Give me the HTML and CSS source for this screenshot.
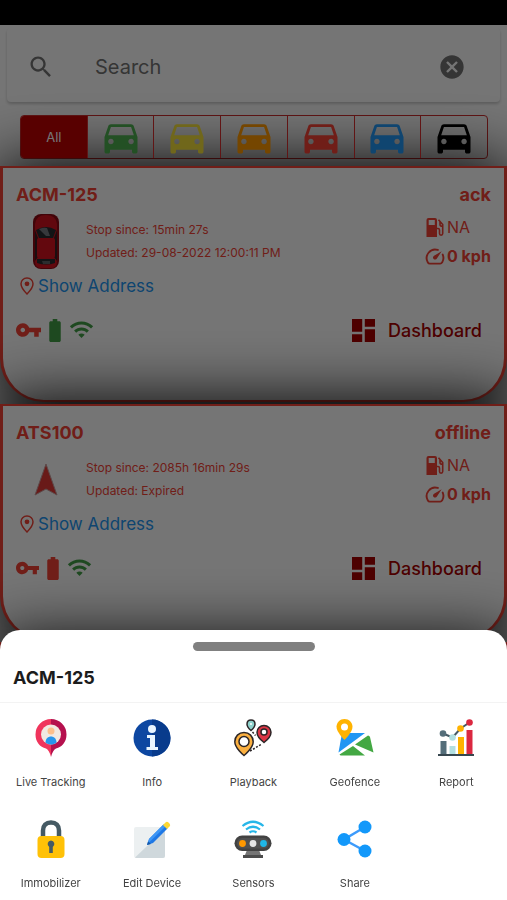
FILE: index.html
```
<!DOCTYPE html>
<html lang="en">
<head>
    <meta charset="UTF-8">
    <meta name="viewport" content="width=device-width, initial-scale=1.0">
    <title>Devices</title>
    <link rel="stylesheet" href="styles.css">
</head>
<body>
    <svg class="sprite" aria-hidden="true">
        <symbol id="car" viewBox="0 0 24 24"><path d="M18.92 6.01C18.72 5.42 18.16 5 17.5 5h-11c-.66 0-1.21.42-1.42 1.01L3 12v8c0 .55.45 1 1 1h1c.55 0 1-.45 1-1v-1h12v1c0 .55.45 1 1 1h1c.55 0 1-.45 1-1v-8l-2.08-5.99zM6.5 16c-.83 0-1.5-.67-1.5-1.5S5.67 13 6.5 13s1.5.67 1.5 1.5S7.33 16 6.5 16zm11 0c-.83 0-1.5-.67-1.5-1.5s.67-1.5 1.5-1.5 1.5.67 1.5 1.5-.67 1.5-1.5 1.5zM5 11l1.5-4.5h11L19 11H5z"/></symbol>
        <symbol id="key" viewBox="1 6 22 12"><path d="M12.65 10C11.83 7.67 9.61 6 7 6c-3.31 0-6 2.69-6 6s2.69 6 6 6c2.61 0 4.83-1.67 5.65-4H17v4h4v-4h2v-4H12.65zM7 14c-1.1 0-2-.9-2-2s.9-2 2-2 2 .9 2 2-.9 2-2 2z"/></symbol>
        <symbol id="battery" viewBox="7 2 10 20"><path d="M15.67 4H14V2h-4v2H8.33C7.6 4 7 4.6 7 5.33v15.33C7 21.4 7.6 22 8.33 22h7.33c.74 0 1.34-.6 1.34-1.33V5.33C17 4.6 16.4 4 15.67 4z"/></symbol>
        <symbol id="wifi" viewBox="1 4 22 17"><path d="M1 9l2 2c4.97-4.97 13.03-4.97 18 0l2-2C16.93 2.93 7.08 2.93 1 9zm8 8l3 3 3-3c-1.65-1.66-4.34-1.66-6 0zm-4-4l2 2c2.76-2.76 7.24-2.76 10 0l2-2C15.14 9.14 8.87 9.14 5 13z"/></symbol>
        <symbol id="dashboard" viewBox="3 3 18 18"><path d="M3 13h8V3H3v10zm0 8h8v-6H3v6zm10 0h8V11h-8v10zm0-18v6h8V3h-8z"/></symbol>
        <symbol id="place" viewBox="0 0 14 18"><path d="M7 1C3.500 1 1 3.600 1 6.800 1 11 7 17 7 17s6-6 6-10.200C13 3.600 10.500 1 7 1z" fill="none" stroke="currentColor" stroke-width="1.500"/><circle cx="7" cy="6.800" r="2.400"/></symbol>
        <symbol id="fuel" viewBox="0 0 18 19"><path fill-rule="evenodd" d="M2.500 0H9a2 2 0 0 1 2 2v17H.5V2a2 2 0 0 1 2-2zm.2 2v5h6.100V2z"/><path d="M11 10.500h1c1 0 1.500.6 1.500 1.500v3.500c0 2.200 3.200 2.200 3.200 0V6.500L12.500 1.800M14 3.500v3.200c0 1 .8 1.600 2.500 1.600" fill="none" stroke="currentColor" stroke-width="1.600"/></symbol>
        <symbol id="speed" viewBox="0 0 21 18"><path d="M13.500 2.100A9 9 0 0 0 3 15.200c.5.900 1 1.300 2 1.300h11c1 0 1.500-.4 2-1.300a9 9 0 0 0 .6-8.200" fill="none" stroke="currentColor" stroke-width="2" stroke-linecap="round"/><path d="M17.500 3.500l-5 7.600a2.200 2.200 0 1 1-3-3z"/></symbol>
    </svg>

    <div class="screen">
        <div class="statusbar"></div>

        <div class="search">
            <svg class="search-icon" viewBox="0 0 24 24"><path d="M15.5 14h-.79l-.28-.27C15.41 12.59 16 11.11 16 9.500 16 5.910 13.090 3 9.500 3S3 5.910 3 9.500 5.910 16 9.500 16c1.610 0 3.090-.59 4.230-1.570l.27.28v.79l5 4.990L20.490 19l-4.990-5zm-6 0C7.010 14 5 11.990 5 9.500S7.010 5 9.500 5 14 7.010 14 9.500 11.990 14 9.500 14z"/></svg>
            <input type="text" placeholder="Search" aria-label="Search">
            <button class="clear" aria-label="Clear">
                <svg viewBox="0 0 24 24"><path d="M12 2C6.470 2 2 6.470 2 12s4.470 10 10 10 10-4.470 10-10S17.530 2 12 2zm5 13.590L15.590 17 12 13.410 8.410 17 7 15.590 10.590 12 7 8.410 8.410 7 12 10.590 15.590 7 17 8.410 13.410 12 17 15.590z"/></svg>
            </button>
        </div>

        <div class="filters">
            <button class="filter active">All</button>
            <button class="filter green" aria-label="Moving"><svg><use href="#car"/></svg></button>
            <button class="filter yellow" aria-label="Idle"><svg><use href="#car"/></svg></button>
            <button class="filter orange" aria-label="Waiting"><svg><use href="#car"/></svg></button>
            <button class="filter red" aria-label="Stopped"><svg><use href="#car"/></svg></button>
            <button class="filter blue" aria-label="Inactive"><svg><use href="#car"/></svg></button>
            <button class="filter black" aria-label="No data"><svg><use href="#car"/></svg></button>
        </div>

        <div class="devices">
            <div class="device">
                <div class="device-head">
                    <span>ACM-125</span>
                    <span class="state">ack</span>
                </div>
                <div class="device-body">
                    <div class="marker">
                        <svg width="28" height="57" viewBox="0 0 28 57">
                            <rect x="1" y="1" width="26" height="55" rx="8" fill="#8f0a14"/>
                            <path d="M3 11Q4 2 14 2t11 9v37q0 7-5 7H8q-5 0-5-7z" fill="#d3121f"/>
                            <path d="M3 17l3 8v19l-3 4zM25 17l-3 8v19l3 4z" fill="#3a2023"/>
                            <path d="M4 17q10-6 20 0l-3 8H7z" fill="#292c30"/>
                            <path d="M7 16q5-2 8-1l3 8h-4z" fill="#777b80"/>
                            <rect x="5" y="25" width="18" height="20" rx="2" fill="#d8121f"/>
                            <path d="M5 46h18v4q-9 3-18 0z" fill="#292c30"/>
                            <path d="M10 48h8v3h-7z" fill="#5e6266"/>
                        </svg>
                    </div>
                    <div class="times">
                        <div>Stop since: 15min 27s</div>
                        <div>Updated: 29-08-2022 12:00:11 PM</div>
                    </div>
                    <div class="gauges">
                        <div class="gauge"><svg class="fuel"><use href="#fuel"/></svg>NA</div>
                        <div class="gauge kph"><svg class="speed"><use href="#speed"/></svg>0 kph</div>
                    </div>
                </div>
                <a class="address" href="#"><svg><use href="#place"/></svg>Show Address</a>
                <div class="device-foot">
                    <svg class="key"><use href="#key"/></svg>
                    <svg class="battery full"><use href="#battery"/></svg>
                    <svg class="wifi"><use href="#wifi"/></svg>
                    <button class="dashboard"><svg><use href="#dashboard"/></svg>Dashboard</button>
                </div>
            </div>

            <div class="device offline">
                <div class="device-head">
                    <span>ATS100</span>
                    <span class="state">offline</span>
                </div>
                <div class="device-body">
                    <div class="marker">
                        <svg width="26" height="36" viewBox="0 0 26 36">
                            <path d="M13 3l11 31-11-6-11 6z" fill="#e53935" stroke="#c9a0a0" stroke-width="1"/>
                        </svg>
                    </div>
                    <div class="times">
                        <div>Stop since: 2085h 16min 29s</div>
                        <div>Updated: Expired</div>
                    </div>
                    <div class="gauges">
                        <div class="gauge"><svg class="fuel"><use href="#fuel"/></svg>NA</div>
                        <div class="gauge kph"><svg class="speed"><use href="#speed"/></svg>0 kph</div>
                    </div>
                </div>
                <a class="address" href="#"><svg><use href="#place"/></svg>Show Address</a>
                <div class="device-foot">
                    <svg class="key"><use href="#key"/></svg>
                    <svg class="battery"><use href="#battery"/></svg>
                    <svg class="wifi"><use href="#wifi"/></svg>
                    <button class="dashboard"><svg><use href="#dashboard"/></svg>Dashboard</button>
                </div>
            </div>

            <div class="device"></div>
        </div>
    </div>

    <div class="scrim"></div>

    <div class="sheet">
        <div class="handle"></div>
        <h2>ACM-125</h2>
        <div class="actions">
            <button class="action">
                <svg viewBox="0 0 38 38">
                    <path d="M19 0A15.500 15.500 0 0 0 3.500 15.500C3.500 23 8 28 14 29.500Q17 30.500 19 38z" fill="#f0345c"/>
                    <path d="M19 0a15.500 15.500 0 0 1 15.500 15.500C34.500 23 30 28 24 29.500Q21 30.500 19 38z" fill="#b5114e"/>
                    <circle cx="19" cy="15.500" r="10" fill="#f1e9e2"/>
                    <circle cx="19" cy="12" r="3.500" fill="#fdc08c"/>
                    <path d="M13.500 23.500c0-8 11-8 11 0-3 2.700-8 2.700-11 0z" fill="#2795ec"/>
                </svg>
                Live Tracking
            </button>
            <button class="action">
                <svg viewBox="0 0 38 38">
                    <circle cx="19" cy="19" r="18.500" fill="#0d47a1"/>
                    <path d="M19 .5a18.500 18.500 0 0 1 0 37z" fill="#083b8c"/>
                    <circle cx="19" cy="10" r="4" fill="#e9f5ff"/>
                    <path d="M14 16h8v12h3v3H13.500v-3H17v-9h-3z" fill="#e9f5ff"/>
                </svg>
                Info
            </button>
            <button class="action">
                <svg viewBox="0 0 38 38" stroke="#2b2527" stroke-width="1.500">
                    <path d="M17 1c-2.500 0-4 1.900-4 4.200C13 8 17 11.500 17 11.500S21 8 21 5.200C21 2.900 19.500 1 17 1z" fill="#8fd3cd"/>
                    <circle cx="17" cy="5" r="1" fill="#fff" stroke="none"/>
                    <path d="M30 6.500c-4 0-7 3-7 6.800 0 5 7 10.200 7 10.200s7-5.200 7-10.200c0-3.800-3-6.800-7-6.800z" fill="#dc3545"/>
                    <circle cx="30" cy="13" r="3" fill="#fff"/>
                    <path d="M10 13.500c-5.300 0-9.200 4-9.200 9.200C.8 29 10 36.500 10 36.500s9.200-7.500 9.200-13.800c0-5.200-3.900-9.200-9.200-9.200z" fill="#fbb040"/>
                    <circle cx="10" cy="22.500" r="5" fill="#fff"/>
                    <path d="M18.500 13l3 3.500M16 32l12-7" fill="none" stroke-dasharray="2 1.500"/>
                </svg>
                Playback
            </button>
            <button class="action">
                <svg viewBox="0 0 38 38">
                    <path d="M6 14h23L2.500 33.500z" fill="#2196f3"/>
                    <path d="M19 25.500L32 16.500q1.500 0 2 1.500l3.500 15.500zM17 27l12 9.500H5q-1 0-1.500-1z" fill="#43a843"/>
                    <path d="M8.500 0C4 0 .5 3.500.5 7.800c0 5.500 8 13.200 8 13.200s8-7.700 8-13.200C16.500 3.500 13 0 8.500 0z" fill="#ffb300"/>
                    <circle cx="8.500" cy="8" r="3.500" fill="#fff"/>
                </svg>
                Geofence
            </button>
            <button class="action">
                <svg viewBox="0 0 38 38">
                    <path d="M3.500 22h6v13h-6z" fill="#546e7a"/>
                    <path d="M12.500 27h6v8h-6z" fill="#b2dfe0"/>
                    <path d="M21 18h6v17h-6z" fill="#ffb300"/>
                    <path d="M29.500 11h6v24h-6z" fill="#db2840"/>
                    <path d="M1 35h36v2H1z" fill="#37474f"/>
                    <path d="M6 14.500l9.500 4 8-9 9-6" fill="none" stroke="#455a64" stroke-width="2"/>
                    <circle cx="6" cy="14.500" r="3.300" fill="#546e7a"/>
                    <circle cx="15.500" cy="18.500" r="3.300" fill="#b2dfe0"/>
                    <circle cx="23.500" cy="9.500" r="3.300" fill="#ffb300"/>
                    <circle cx="32.500" cy="3.500" r="3.300" fill="#db2840"/>
                </svg>
                Report
            </button>
            <button class="action">
                <svg viewBox="0 0 38 38">
                    <path d="M11 18v-7.500C11 5.500 14 2.500 19 2.500s8 3 8 8V18" fill="none" stroke="#455a64" stroke-width="4.500"/>
                    <rect x="5.500" y="16" width="27" height="22" rx="4" fill="#ffc107"/>
                    <path d="M19 20.500a3.500 3.500 0 0 0-1.800 6.400V33h3.600v-6.100A3.500 3.500 0 0 0 19 20.500z" fill="#455a64"/>
                </svg>
                Immobilizer
            </button>
            <button class="action">
                <svg viewBox="0 0 38 38">
                    <rect x="1" y="7" width="31" height="31" rx="2" fill="#ecf0f1"/>
                    <path d="M2 37.500L32 9v27q0 2-2 2H3z" fill="#cfd8dc"/>
                    <path d="M14 25l2-6L30.500 4.500l4 4L20 23z" fill="#1e78e6"/>
                    <path d="M16 19L30.500 4.500l2 2L15 23.500z" fill="#3d96f5"/>
                    <path d="M14 25l1-3.500 3 2.500z" fill="#1558a8"/>
                    <path d="M30 5l2.500-2.500Q34 1 36 3t.5 3.500L34 9z" fill="#fdd835"/>
                </svg>
                Edit Device
            </button>
            <button class="action">
                <svg viewBox="0 0 38 38">
                    <path d="M8.500 6q10.500-8.500 21 0M12 9.500q7-5.500 14 0M15.500 12.500q3.500-2.500 7 0" fill="none" stroke="#26b6e8" stroke-width="2.200"/>
                    <path d="M13 30h12l2 5h2v3H9v-3h2z" fill="#757575"/>
                    <path d="M9 35h20v3H9z" fill="#4c4c4c"/>
                    <rect x=".5" y="15.500" width="37" height="15.500" rx="7.700" fill="#424242"/>
                    <rect x="3" y="18" width="32" height="10.500" rx="5.200" fill="#505050"/>
                    <circle cx="8.500" cy="23.500" r="3.400" fill="#ff9800"/>
                    <circle cx="19" cy="23.500" r="3.400" fill="#e5e5e5"/>
                    <circle cx="29.500" cy="23.500" r="3.400" fill="#1fb7e8"/>
                </svg>
                Sensors
            </button>
            <button class="action">
                <svg viewBox="0 0 38 38">
                    <path d="M29 7L8 19.500 29 31" fill="none" stroke="#3d9bfb" stroke-width="2.500"/>
                    <circle cx="29" cy="7" r="6.500" fill="#1298fa"/>
                    <circle cx="8" cy="19.500" r="6.500" fill="#1298fa"/>
                    <circle cx="29" cy="31" r="6.500" fill="#1298fa"/>
                </svg>
                Share
            </button>
        </div>
    </div>
</body>
</html>
```
FILE: styles.css
```
* {
    box-sizing: border-box;
}

body {
    margin: 0;
    background-color: #fff;
    font-family: Inter, "Open Sans", sans-serif;
}

button {
    border: none;
    background: none;
    padding: 0;
    margin: 0;
    font-family: inherit;
    color: inherit;
    cursor: pointer;
}

svg {
    display: block;
    fill: currentColor;
    flex: none;
}

.sprite {
    position: absolute;
    width: 0;
    height: 0;
}

.screen {
    height: 100vh;
    overflow: hidden;
}

.statusbar {
    height: 25px;
    background-color: #000;
}

.search {
    display: flex;
    align-items: center;
    height: 74px;
    margin: 3px 7px 13px;
    padding: 3px 34px 0 20px;
    border-radius: 4px;
    background-color: #fff;
    box-shadow: 0 2px 3px rgba(0, 0, 0, 0.2);
    color: #757575;
}

.search svg {
    width: 28px;
    height: 28px;
}

.search input {
    flex: 1;
    min-width: 0;
    margin-left: 40px;
    padding: 0;
    border: none;
    outline: none;
    background: none;
    font-family: inherit;
    font-size: 20px;
    color: #333;
}

.search input::placeholder {
    color: #757575;
    opacity: 1;
}

.filters {
    display: flex;
    height: 44px;
    margin: 0 19px 7px 20px;
    border: 1px solid #d32f2f;
    border-radius: 4px;
    overflow: hidden;
}

.filter {
    flex: 1;
    display: flex;
    justify-content: center;
    align-items: center;
    border-left: 1px solid #d32f2f;
}

.filter:first-child {
    border-left: none;
}

.filter svg {
    width: 44px;
    height: 44px;
}

.filter.active {
    background-color: #c00000;
    color: #fff;
    font-size: 13px;
}

.filter.green { color: #4caf50; }
.filter.yellow { color: #f5e03b; }
.filter.orange { color: #ff9800; }
.filter.red { color: #f44336; }
.filter.blue { color: #2196f3; }
.filter.black { color: #000; }

.device {
    min-height: 236px;
    margin-bottom: 2px;
    padding: 13px 13px 12px;
    border: 2px solid #f44336;
    border-left-width: 3px;
    border-right-width: 3px;
    border-radius: 0 0 44px 44px;
    background-color: #fff;
    box-shadow: 0 0 64px 2px #000;
    color: #f44336;
}

.device-head {
    display: flex;
    justify-content: space-between;
    line-height: 28px;
    font-size: 18px;
    font-weight: 700;
}

.device-body {
    display: flex;
    height: 64px;
}

.marker {
    display: flex;
    justify-content: center;
    align-items: center;
    width: 60px;
    margin-right: 10px;
}

.times {
    padding-top: 9px;
    font-size: 12px;
    line-height: 23px;
}

.gauges {
    width: 66px;
    margin-left: auto;
    padding-top: 4px;
}

.gauge {
    display: flex;
    align-items: center;
    gap: 2px;
    font-size: 16px;
    line-height: 29px;
    white-space: nowrap;
}

.gauge.kph {
    font-size: 16px;
    font-weight: 700;
}

.fuel,
.speed {
    width: 20px;
    height: 19px;
}

.address {
    display: flex;
    align-items: center;
    gap: 4px;
    margin-left: 4px;
    font-size: 17px;
    line-height: 26px;
    color: #2196f3;
    text-decoration: none;
}

.address svg {
    width: 14px;
    height: 18px;
    color: #f44336;
}

.device-foot {
    display: flex;
    align-items: center;
    gap: 8px;
    height: 28px;
    margin-top: 17px;
}

.key {
    width: 25px;
    height: 14px;
}

.offline .key {
    width: 23px;
}

.battery {
    width: 12px;
    height: 23px;
}

.battery.full,
.wifi {
    color: #43a047;
}

.wifi {
    width: 25px;
    height: 18px;
}

.dashboard {
    display: flex;
    align-items: center;
    gap: 13px;
    margin-left: auto;
    margin-right: 9px;
    font-size: 18px;
    font-weight: 500;
    color: #a80000;
}

.dashboard svg {
    width: 23px;
    height: 23px;
}

.scrim {
    position: fixed;
    inset: 0;
    background-color: rgba(0, 0, 0, 0.54);
}

.sheet {
    position: fixed;
    left: 0;
    right: 0;
    bottom: 0;
    padding-top: 12px;
    border-radius: 20px 20px 0 0;
    background-color: #fff;
}

.handle {
    width: 122px;
    height: 9px;
    margin: 0 auto;
    border-radius: 5px;
    background-color: #808080;
}

.sheet h2 {
    margin: 0;
    padding: 12px 13px 9px;
    border-bottom: 1px solid #f3f3f3;
    font-size: 18px;
    font-weight: 700;
    line-height: 30px;
    color: #1c1c1c;
}

.actions {
    display: grid;
    grid-template-columns: repeat(5, 1fr);
    row-gap: 29px;
    padding: 16px 0 8px;
}

.action {
    display: flex;
    flex-direction: column;
    align-items: center;
    gap: 16px;
    font-size: 11px;
    line-height: 18px;
    color: #444;
    white-space: nowrap;
}

.action svg {
    width: 38px;
    height: 38px;
}
```
